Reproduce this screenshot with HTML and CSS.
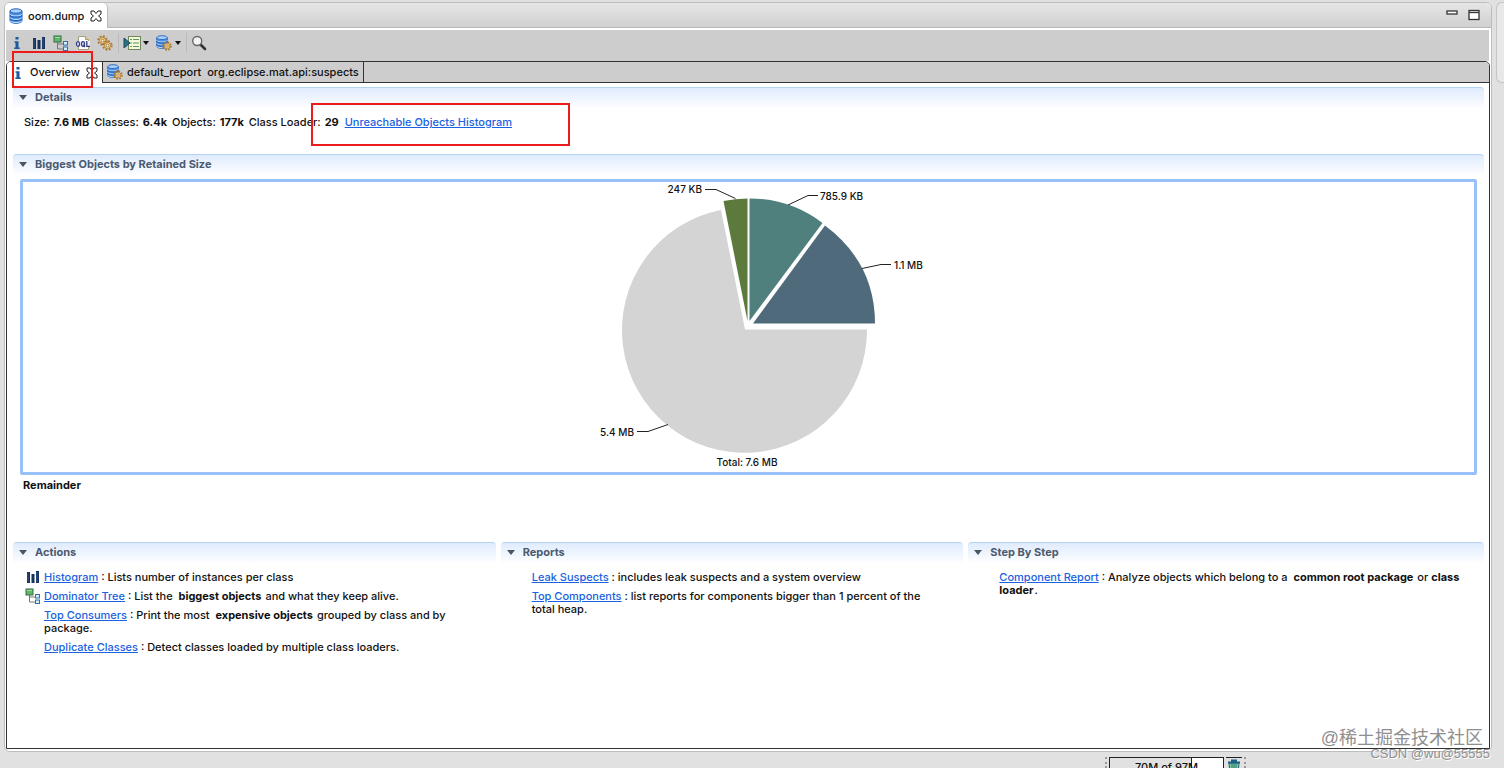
FILE: index.html
```html
<!DOCTYPE html>
<html lang="en">
<head>
    <meta charset="UTF-8">
    <meta name="viewport" content="width=device-width, initial-scale=1.0">
    <title>oom.dump</title>
    <link rel="stylesheet" href="styles.css">
</head>
<body>
    <!-- shared icons -->
    <svg class="defs" width="0" height="0" aria-hidden="true">
        <symbol id="db" viewBox="0 0 16 16">
            <path d="M2 3v10c0 3 12 3 12 0V3z" fill="#4b92e6" stroke="#2560b8"/>
            <path d="M2 6c0 2.600 12 2.600 12 0M2 9.500c0 2.600 12 2.600 12 0M2 12.500c0 2.600 12 2.600 12 0" fill="none" stroke="#c4e2ff" stroke-width="1"/>
            <path d="M2 7.200c0 2.600 12 2.600 12 0M2 10.700c0 2.600 12 2.600 12 0" fill="none" stroke="#1c56ad" stroke-width="1"/>
            <ellipse cx="8" cy="3" rx="6" ry="2.200" fill="#a9d1fa" stroke="#2560b8"/>
        </symbol>
        <symbol id="gear" viewBox="0 0 16 16">
            <circle cx="8" cy="8" r="6.300" fill="none" stroke="#a9742e" stroke-width="2.600" stroke-dasharray="2.600 2.350"/>
            <circle cx="8" cy="8" r="4.600" fill="#f3d48b" stroke="#b17e34" stroke-width="1.400"/>
            <circle cx="8" cy="8" r="1.900" fill="#fff" stroke="#8a5a1c"/>
        </symbol>
        <symbol id="db-gear" viewBox="0 0 16 16">
            <use href="#db" x="-1" y="0" width="14" height="14"/>
            <use href="#gear" x="6" y="6" width="10" height="10"/>
        </symbol>
        <symbol id="info" viewBox="0 0 16 16">
            <path d="M6.500 2h3v2.500h-3zM5.500 6.200h4v6.300h1.200V14H5.300v-1.500h1.200V7.700h-1z" fill="#1b5a9c"/>
        </symbol>
        <symbol id="bars" viewBox="0 0 16 16">
            <path d="M2 3h3v11H2zM6.500 5h3v9h-3zM11 2h3v12h-3z" fill="#17335f"/>
            <path d="M3 4v9M12 3v10" stroke="#35527f" stroke-width="1"/>
        </symbol>
        <symbol id="tree" viewBox="0 0 16 16">
            <path d="M4.500 7v7H10M4.500 9H10" fill="none" stroke="#777"/>
            <rect x="1" y="1" width="7" height="6" fill="#66b16b" stroke="#2d7440"/>
            <path d="M2 2.500h5" stroke="#a9d9a5"/>
            <rect x="10.500" y="6.500" width="4" height="3.500" fill="#d5edff" stroke="#2f70a8"/>
            <rect x="10.500" y="12" width="4" height="3.500" fill="#d5edff" stroke="#2f70a8"/>
        </symbol>
        <symbol id="close" viewBox="0 0 12 12">
            <path d="M1 1h3l2 2.500L8 1h3v3L8.500 6 11 8v3H8L6 8.500 4 11H1V8l2.500-2L1 4z" fill="#fff" stroke="#222"/>
        </symbol>
    </svg>

    <div class="workbench">
        <div class="main-row">
            <main class="editor">
                <header class="title-bar">
                    <div class="file-tab">
                        <svg class="icon"><use href="#db"/></svg>
                        <span>oom.dump</span>
                        <button class="close-btn" aria-label="Close oom.dump"><svg class="close"><use href="#close"/></svg></button>
                    </div>
                    <div class="window-buttons">
                        <button aria-label="Minimize"><svg width="12" height="12"><rect x="1" y="2" width="10" height="3" fill="#fff" stroke="#333" stroke-width="1.300"/></svg></button>
                        <button aria-label="Maximize"><svg width="12" height="12"><rect x="1" y="1.500" width="10" height="9" fill="#fff" stroke="#333" stroke-width="1.300"/><path d="M1 3.500h10" stroke="#333" stroke-width="1.300"/></svg></button>
                    </div>
                </header>

                <div class="toolbar">
                    <button aria-label="Overview"><svg class="icon"><use href="#info"/></svg></button>
                    <button aria-label="Histogram"><svg class="icon"><use href="#bars"/></svg></button>
                    <button aria-label="Dominator tree"><svg class="icon"><use href="#tree"/></svg></button>
                    <button aria-label="OQL">
                        <svg class="icon" viewBox="0 0 16 16">
                            <path d="M3.500 1.500h7l3 3v10h-10z" fill="#fff" stroke="#a3a07c"/>
                            <path d="M10.500 1.500v3h3" fill="#eadb9a" stroke="#b29c52"/>
                            <path d="M1 6h14v6H1z" fill="#eef"/>
                            <g fill="none" stroke="#37407f" stroke-width="1.300"><ellipse cx="3" cy="9" rx="1.500" ry="2.400"/><ellipse cx="8" cy="9" rx="1.500" ry="2.400"/><path d="M8 10l2 2M11.800 6v5.400H15"/></g>
                        </svg>
                    </button>
                    <button aria-label="Run expert system test">
                        <svg class="icon" viewBox="0 0 16 16"><use href="#gear" width="11" height="11"/><use href="#gear" x="5" y="5" width="11" height="11"/></svg>
                    </button>
                    <span class="divider"></span>
                    <button class="drop" aria-label="Open query browser">
                        <svg class="icon wide" viewBox="0 0 18 16">
                            <rect x="5.500" y="1.500" width="12" height="13" fill="#f5f8d9" stroke="#71885b"/>
                            <path d="M7 4.500h2M10 4.500h6M7 8h2M10 8h6M7 11.500h2M10 11.500h6" stroke="#5b9565"/>
                            <path d="M1 3l6 5-6 5z" fill="#2d7180" stroke="#184a63"/>
                        </svg>
                        <span class="arrow"></span>
                    </button>
                    <button class="drop" aria-label="Run report">
                        <svg class="icon wide"><use href="#db-gear"/></svg>
                        <span class="arrow"></span>
                    </button>
                    <span class="divider"></span>
                    <button aria-label="Find">
                        <svg class="icon" viewBox="0 0 16 16">
                            <path d="M9 9l5 5" stroke="#333" stroke-width="2.600" stroke-linecap="round"/>
                            <circle cx="6.200" cy="6" r="4.500" fill="#f4f4f0" stroke="#666" stroke-width="1.400"/>
                        </svg>
                    </button>
                </div>

                <div class="pages">
                    <nav class="page-tabs">
                        <div class="page-tab active">
                            <svg class="icon"><use href="#info"/></svg>
                            <span>Overview</span>
                            <button class="close-btn" aria-label="Close Overview"><svg class="close"><use href="#close"/></svg></button>
                            <span class="mark mark-tab"></span>
                        </div>
                        <div class="page-tab">
                            <svg class="icon"><use href="#db-gear"/></svg>
                            <span>default_report&nbsp; org.eclipse.mat.api:suspects</span>
                        </div>
                    </nav>

                    <div class="page">
                        <section class="details">
                            <h2>Details</h2>
                            <p class="summary">
                                Size: <b>7.6 MB</b> Classes: <b>6.4k</b> Objects: <b>177k</b> Class Loader: <b>29</b>
                                <a href="#">Unreachable Objects Histogram</a>
                            </p>
                            <span class="mark mark-link"></span>
                        </section>

                        <section class="biggest">
                            <h2>Biggest Objects by Retained Size</h2>
                            <div class="chart">
                                <svg width="360" height="290" viewBox="569 182 360 290" role="img" aria-label="Biggest objects by retained size">
                                    <path d="M745 329.500H867A122.500 122.500 0 1 1 721 210z" fill="#d4d4d4"/>
                                    <path d="M747.500 321V198.500Q735 198.500 723.500 201z" fill="#5b7a3b"/>
                                    <path d="M749.500 321V198.500Q790 198.500 822.500 223z" fill="#50807e"/>
                                    <path d="M753 323.500L825 225.500Q875 263 875 323.500z" fill="#4e6a7b"/>
                                    <g fill="none" stroke="#222">
                                        <path d="M705 189.500H716L735.500 198.500"/>
                                        <path d="M788 205L808 195.500H818"/>
                                        <path d="M862 268.500L881 264.500H891"/>
                                        <path d="M637 431.500H648L668 424.500"/>
                                    </g>
                                    <text x="702" y="193" text-anchor="end">247 KB</text>
                                    <text x="820" y="200">785.9 KB</text>
                                    <text x="894" y="269">1.1 MB</text>
                                    <text x="634" y="436" text-anchor="end">5.4 MB</text>
                                    <text x="747" y="466" text-anchor="middle">Total: 7.6 MB</text>
                                </svg>
                            </div>
                            <p class="selected">Remainder</p>
                        </section>

                        <div class="columns">
                            <section class="actions">
                                <h2>Actions</h2>
                                <ul>
                                    <li><svg class="icon"><use href="#bars"/></svg><a href="#">Histogram</a> : Lists number of instances per class</li>
                                    <li><svg class="icon"><use href="#tree"/></svg><a href="#">Dominator Tree</a> : List the&nbsp; <b>biggest objects</b> and what they keep alive.</li>
                                    <li><a href="#">Top Consumers</a> : Print the most&nbsp; <b>expensive objects</b> grouped by class and by package.</li>
                                    <li><a href="#">Duplicate Classes</a> : Detect classes loaded by multiple class loaders.</li>
                                </ul>
                            </section>
                            <section class="reports">
                                <h2>Reports</h2>
                                <ul>
                                    <li><a href="#">Leak Suspects</a> : includes leak suspects and a system overview</li>
                                    <li><a href="#">Top Components</a> : list reports for components bigger than 1 percent of the total heap.</li>
                                </ul>
                            </section>
                            <section class="steps">
                                <h2>Step By Step</h2>
                                <ul>
                                    <li><a href="#">Component Report</a> : Analyze objects which belong to a&nbsp; <b>common root package</b> or <b>class loader</b>.</li>
                                </ul>
                            </section>
                        </div>
                    </div>
                </div>
            </main>
            <aside class="side-stub"></aside>
        </div>

        <footer class="status-bar">
            <span class="grip"></span>
            <div class="heap"><span>70M of 97M</span></div>
            <button class="gc" aria-label="Run garbage collector">
                <svg width="16" height="16" viewBox="-1 -1 16 16">
                    <path d="M2 4h10l-1 11H3z" fill="#7fc7a0" stroke="#1e6a7c"/>
                    <path d="M5 5v9M7 5v9M9 5v9" stroke="#2b7d6d"/>
                    <path d="M1 3.500h12M4 1.500h6" stroke="#1d6186" stroke-width="2"/>
                </svg>
            </button>
            <span class="grip"></span>
        </footer>

        <div class="watermark">
            <span class="wm-community">@稀土掘金技术社区</span>
            <span class="wm-author">CSDN @wu@55555</span>
        </div>
    </div>
</body>
</html>
```
FILE: styles.css
```css
* {
    margin: 0;
    padding: 0;
    box-sizing: border-box;
}

body {
    background: #e1e1e1;
    color: #111;
    font-family: Inter, "Liberation Sans", "Noto Sans CJK SC", sans-serif;
    font-size: 11px;
    font-weight: 500;
    line-height: 13px;
}

button {
    display: flex;
    align-items: center;
    background: none;
    border: none;
    cursor: pointer;
}

a {
    color: #1a62e0;
}

.defs {
    position: absolute;
}

.icon {
    width: 16px;
    height: 16px;
    flex: none;
}

.close {
    width: 12px;
    height: 12px;
}

.workbench {
    position: relative;
    display: flex;
    flex-direction: column;
    height: 100vh;
    overflow: hidden;
}

.main-row {
    flex: 1;
    display: flex;
    gap: 4px;
    padding: 2px 0 0 4px;
    min-height: 0;
}

.editor {
    flex: 1;
    display: flex;
    flex-direction: column;
    min-width: 0;
    background: #fff;
    border: 1px solid #bdbdbd;
    border-radius: 6px;
}

.side-stub {
    width: 8px;
    height: 81px;
    background: #e8e8e8;
    border: 1px solid #c4c4c4;
    border-right: none;
    border-radius: 6px 0 0 6px;
}

/* title bar */
.title-bar {
    display: flex;
    justify-content: space-between;
    height: 25px;
    background: linear-gradient(#e6e6e6, #d0d0d0);
    border-bottom: 1px solid #b8b8b8;
    border-radius: 5px 5px 0 0;
}

.file-tab {
    display: flex;
    align-items: center;
    gap: 4px;
    height: 25px;
    padding: 1px 5px 0 3px;
    background: #fff;
    border-right: 1px solid #bbb;
    border-radius: 5px 5px 0 0;
}

.close-btn {
    padding-left: 2px;
}

.window-buttons {
    display: flex;
    align-items: center;
    gap: 10px;
    padding-right: 11px;
}

/* toolbar */
.toolbar {
    display: flex;
    align-items: center;
    gap: 6px;
    height: 31px;
    margin: 2px 2px 0 1px;
    padding: 0 3px 5px;
    background: #cdcdcd;
}

.drop {
    gap: 2px;
}

.icon.wide {
    width: 18px;
}

.arrow {
    border: 3px solid transparent;
    border-top: 4px solid #111;
    border-bottom: none;
}

.divider {
    width: 1px;
    height: 20px;
    margin: 0 -2px 0 -1px;
    background: #bbb;
}

/* inner pages */
.pages {
    flex: 1;
    display: flex;
    flex-direction: column;
    min-height: 0;
    margin: 0 1px 2px 1px;
    border: 1px solid #333;
    border-radius: 5px 5px 0 0;
    background: #fff;
}

.page-tabs {
    display: flex;
    height: 21px;
    background: #cdcdcd;
    border-bottom: 1px solid #333;
    border-radius: 4px 4px 0 0;
}

.page-tab {
    position: relative;
    display: flex;
    align-items: center;
    gap: 4px;
    height: 20px;
    padding: 0 4px;
    border-right: 1px solid #333;
}

.page-tab.active {
    height: 21px;
    padding-left: 3px;
    background: #fff;
    border-radius: 4px 0 0 0;
}

.page {
    flex: 1;
    padding: 4px 5px 0 6px;
    min-height: 0;
}

/* sections */
h2 {
    display: flex;
    align-items: center;
    gap: 8px;
    height: 22px;
    padding: 0 8px 2px 6px;
    font-size: 11px;
    line-height: 13px;
    color: #4b5a70;
    background: linear-gradient(#dfebfd, #fff);
    border-top: 1px solid #b5d2f2;
    border-radius: 4px 4px 0 0;
}

h2::before {
    content: "";
    border: 4px solid transparent;
    border-top: 5px solid #4b5663;
    border-bottom: none;
}

.details {
    position: relative;
    height: 67px;
}

.summary {
    padding: 7px 11px;
}

.summary b {
    margin: 0 2px 0 1px;
}

.summary a {
    margin-left: 1px;
}

.biggest {
    height: 388px;
}

.chart {
    display: flex;
    justify-content: center;
    margin: 3px 7px 0;
    border: 3px solid #99c1f9;
    border-radius: 2px;
}

.chart text {
    font-size: 10px;
    fill: #111;
}

.selected {
    padding: 4px 10px;
    font-weight: bold;
}

.columns {
    display: grid;
    grid-template-columns: 483fr 463fr 516fr;
    gap: 5px;
}

.columns ul {
    display: flex;
    flex-direction: column;
    gap: 6px;
    padding: 7px 10px 0 31px;
    list-style: none;
}

.columns b {
    margin-right: 1px;
}

.actions ul {
    padding-right: 24px;
}

.reports ul {
    padding-right: 36px;
}

.columns li {
    position: relative;
}

.columns li .icon {
    position: absolute;
    left: -19px;
    top: -2px;
}

/* red highlight frames */
.mark {
    position: absolute;
    border: 2px solid #ed1c1c;
    pointer-events: none;
    z-index: 1;
}

.mark-tab {
    left: 5px;
    top: -11px;
    width: 81px;
    height: 37px;
}

.mark-link {
    left: 298px;
    top: 16px;
    width: 259px;
    height: 43px;
}

/* status bar */
.status-bar {
    display: flex;
    justify-content: flex-end;
    gap: 2px;
    height: 16px;
    padding: 5px 258px 0 0;
    overflow: hidden;
}

.grip {
    border-left: 2px dotted #999;
}

.heap {
    width: 115px;
    height: 20px;
    border: 1px solid #222;
    background: linear-gradient(90deg, #e1e1e1 81px, #222 81px, #222 82px, #fff 82px);
    text-align: center;
    line-height: 19px;
}

.gc {
    align-items: flex-start;
    height: 20px;
    border-top: 1px solid #222;
}

.watermark {
    position: absolute;
    right: 14px;
    bottom: 7px;
    display: flex;
    flex-direction: column;
    align-items: flex-end;
    color: #8f8f8f;
    text-shadow: 1px 1px 0 #fff;
    font-weight: 400;
    pointer-events: none;
}

.wm-community {
    padding-right: 7px;
    font-family: "Liberation Sans", "Noto Sans CJK SC", sans-serif;
    font-size: 18px;
    line-height: 18px;
}

.wm-author {
    font-family: "Liberation Sans", sans-serif;
    font-size: 13px;
    line-height: 14px;
}
```
